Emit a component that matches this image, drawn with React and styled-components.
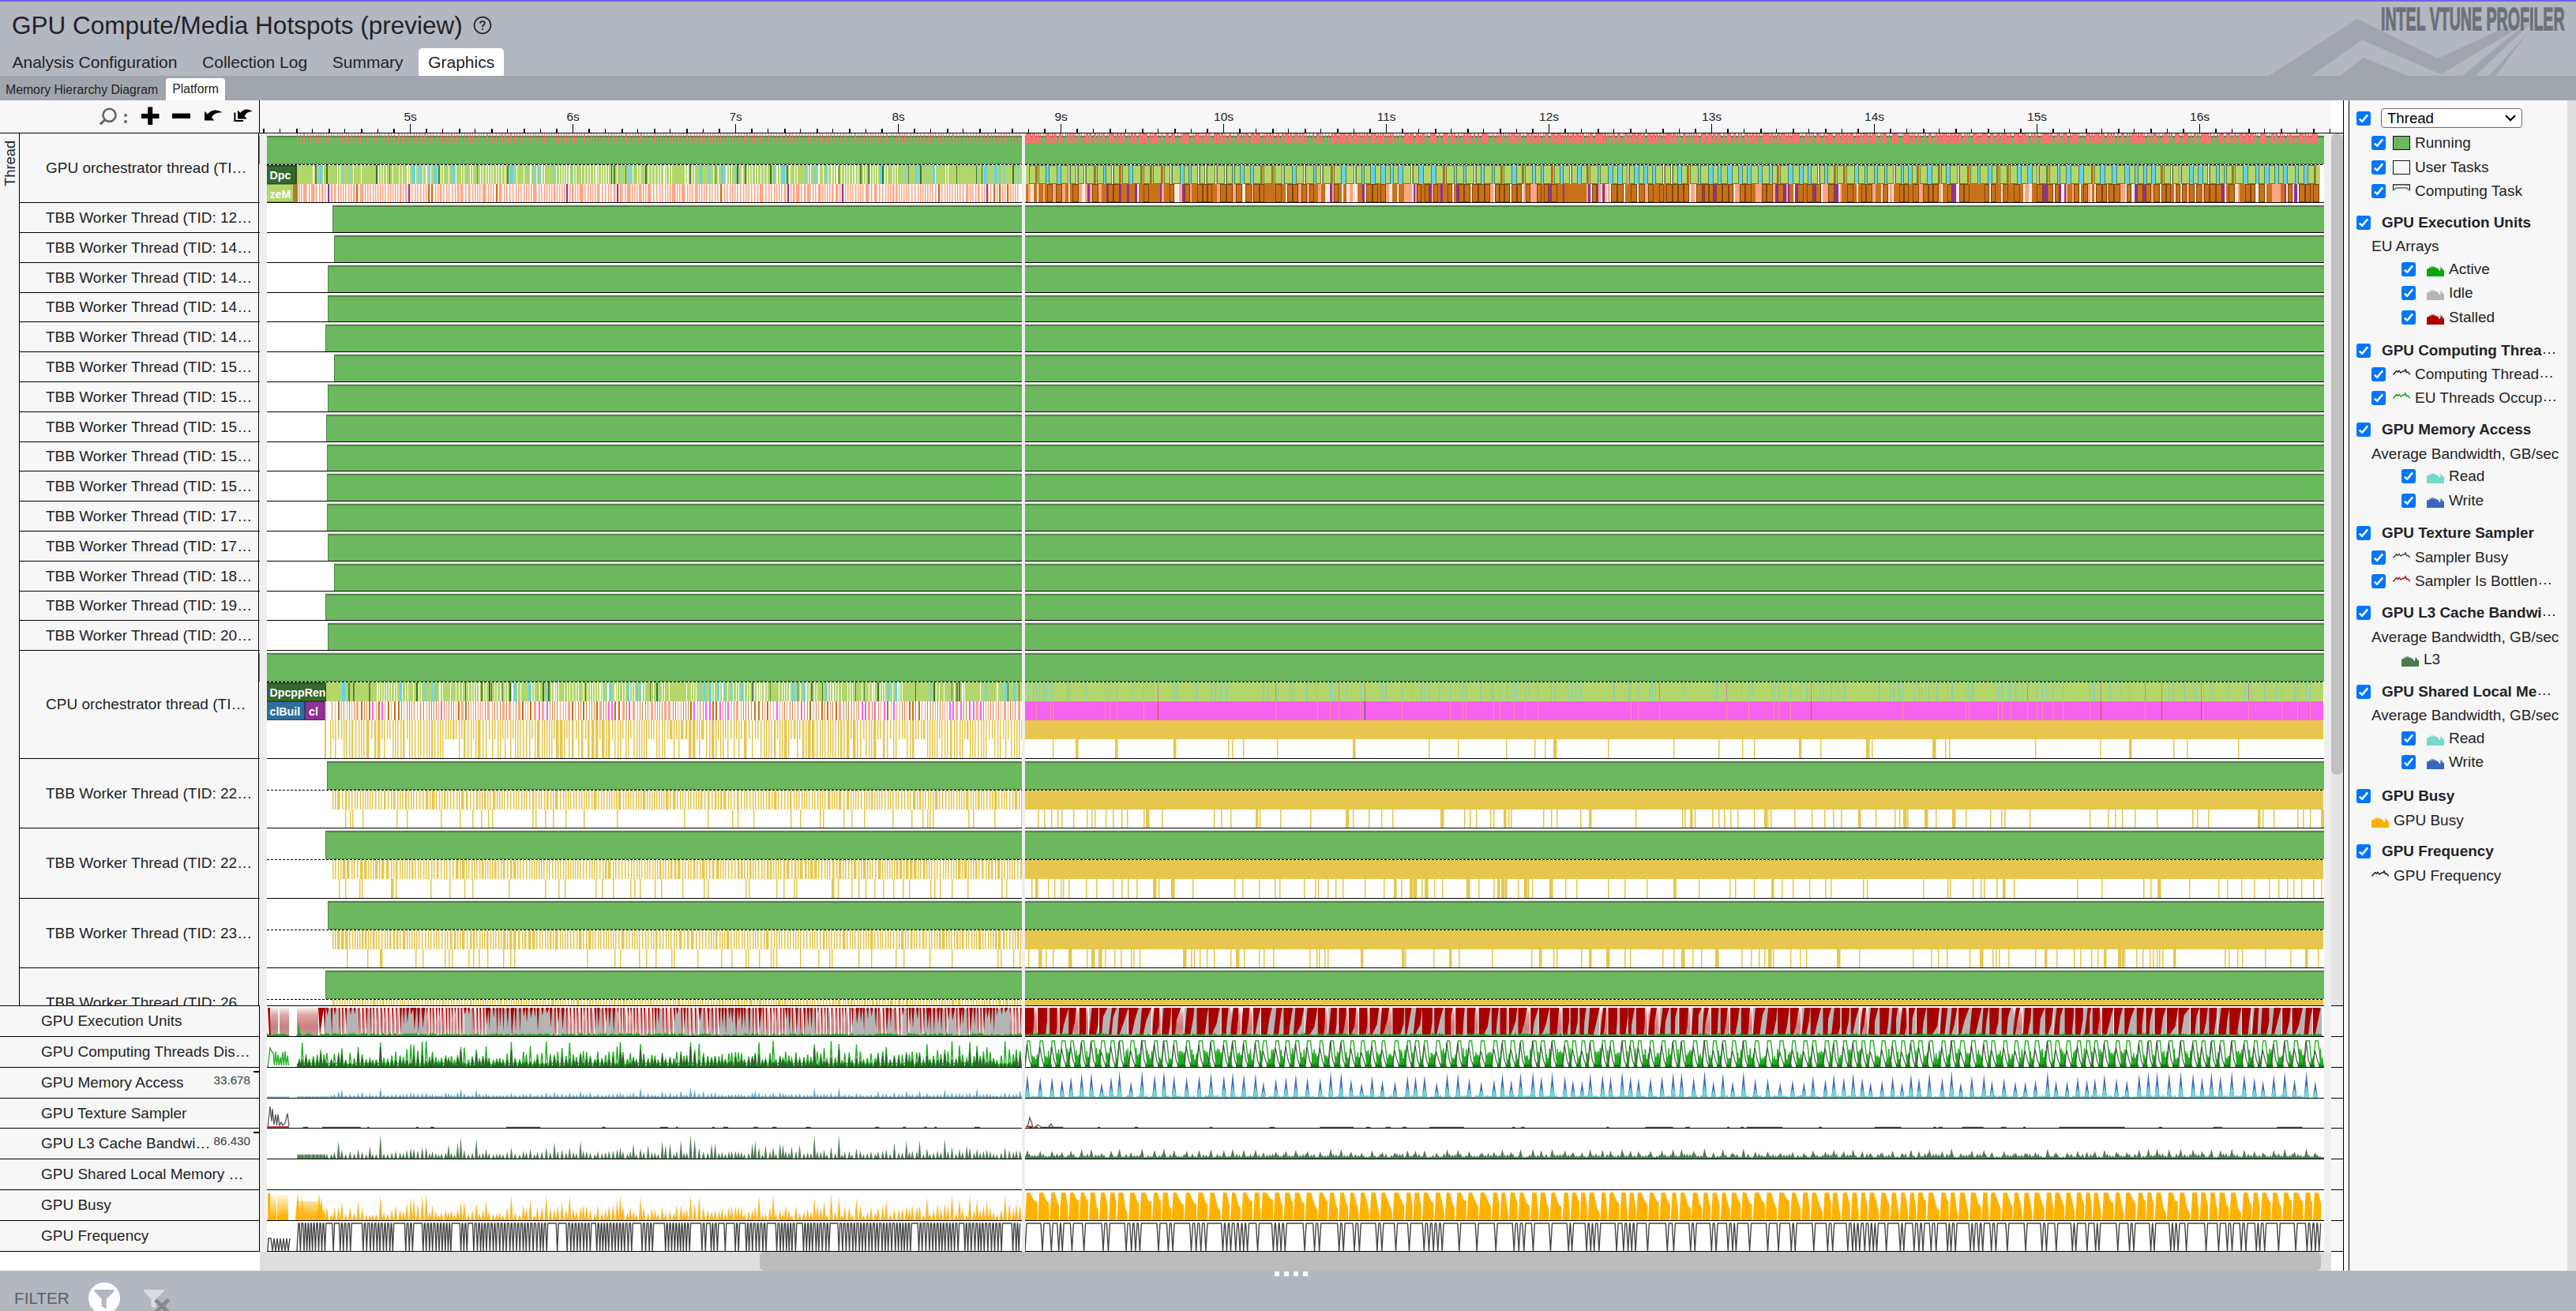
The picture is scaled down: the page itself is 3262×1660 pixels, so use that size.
import React from "react";
import styled, { createGlobalStyle } from "styled-components";

/* ---------- palette ---------- */
const C = {
  text: "#222326",
  bar: "#b3b7c0",
  sub: "#a1a5ac",
  panel: "#f7f7f7",
  green: "#6cb85e",
  greenEdge: "#55824b",
  lime: "#b3d66b",
  olive: "#5b8240",
  forest: "#35682b",
  cyan: "#62d3ee",
  salmon: "#ffa585",
  orange: "#c97119",
  orangeEdge: "#7d4509",
  purple: "#8f3296",
  magenta: "#f663ec",
  gold: "#e6c64d",
  goldSoft: "#f2e2a2",
  red: "#ff7272",
  gutter: "#efeff0",
};

const PLOT_W = 2605;
const SPLIT = 956;

/* ---------- deterministic sample data ---------- */
const rng = (seed) => () => {
  seed = (seed + 0x6d2b79f5) | 0;
  let t = Math.imul(seed ^ (seed >>> 15), 1 | seed);
  t = (t + Math.imul(t ^ (t >>> 7), 61 | t)) ^ t;
  return ((t ^ (t >>> 14)) >>> 0) / 4294967296;
};

const range = (n) => Array.from({ length: n }, (_, i) => i);

/* peaks of GPU activity in the dense right part of the timeline */
const PEAKS = (() => {
  const r = rng(91);
  const out = [];
  let x = SPLIT + 7;
  while (x < PLOT_W - 5) {
    out.push({ x, h: 0.55 + r() * 0.45, w: 0.4 + r() * 0.6 });
    x += 10 + r() * 6.4;
  }
  return out;
})();

/* kernel launches in the sparse left part */
const EVENTS = (() => {
  const r = rng(17);
  const out = [];
  let x = 41;
  while (x < SPLIT - 2) {
    const tall = r() < 0.2;
    out.push({ x, h: tall ? 0.55 + r() * 0.45 : 0.12 + r() * 0.42, m: r() });
    x += 3.4 + r() * 2.4;
  }
  return out;
})();

const f = (n) => Math.round(n * 10) / 10;

const box = (x, w, y, h) => `M${x} ${y}h${w}v${h}h${-w}z`;

/* items are [x, width, y, height, fill, layer] */
function Bars({ items }) {
  const groups = new Map();
  items.forEach(([x, w, y, h, fill, layer = 0]) => {
    const key = `${layer}|${fill}`;
    if (!groups.has(key)) groups.set(key, { layer, fill, d: "" });
    groups.get(key).d += box(x, w, y, h);
  });
  const sorted = [...groups.values()].sort((a, b) => a.layer - b.layer);
  return (
    <g shapeRendering="crispEdges">
      {sorted.map((g) => (
        <path key={g.layer + g.fill} d={g.d} fill={g.fill} />
      ))}
    </g>
  );
}

/* ---------- thread tracks ---------- */
const sparseGold = (seed, y, h, from, to, gap, wide) => {
  const r = rng(seed);
  const out = [];
  let x = from + r() * gap;
  while (x < to) {
    const big = r() < wide;
    const w = big ? 3 + Math.floor(r() * 2) : 1;
    out.push([Math.floor(x), w, y, h, C.gold]);
    out.push([Math.floor(x) + w, 1, y, h, C.goldSoft]);
    x += 3 + -Math.log(1 - r()) * gap;
  }
  return out;
};

const denseGold = (seed, y, h, from, to, keep = 1) => {
  const r = rng(seed);
  const out = [];
  for (let x = from; x < to; ) {
    const w = r() < 0.2 ? 2 + Math.floor(r() * 2) : 1;
    if (r() < keep) {
      out.push([x, w, y, h, C.gold]);
      out.push([x + w, 1, y, h, C.goldSoft]);
    }
    x += w + 2 + (r() < 0.35 ? 1 : 0);
  }
  return out;
};

const redMarks = () => {
  const r = rng(5);
  const out = [];
  for (let x = 38; x < SPLIT; ) {
    const w = r() < 0.09 ? 2 : 1;
    out.push([x, w, 0, 12, "rgba(255,112,112,.8)"]);
    x += w + 2 + Math.floor(r() * 2.2);
  }
  for (let x = SPLIT + 5; x < PLOT_W - 5; ) {
    const w = 1 + Math.floor(r() * r() * 10);
    out.push([x, w, 0, 12, C.red]);
    x += w + 1 + (r() < 0.3 ? 2 : 0);
  }
  return out;
};

const limeLeft = (seed, y, h, from, cyanRate) => {
  const r = rng(seed);
  const out = [[from, SPLIT - from, y, h, C.lime]];
  for (let x = from + 20; x < SPLIT - 2; x += 3 + Math.floor(r() * 1.5)) {
    const zone = Math.sin(x / 23) + Math.sin(x / 61 + seed);
    const p = r();
    const cyanHere = Math.sin(x / 19 + seed) > 0 ? cyanRate * 1.7 : cyanRate * 0.3;
    if (p < cyanHere) out.push([x, 1 + Math.floor(r() * 4), y, h, r() < 0.5 ? C.cyan : "#86d4c4", 1]);
    else if (p < cyanHere + 0.11) out.push([x, 1 + Math.floor(r() * 2), y, h, r() < 0.5 ? C.olive : "#3f7428", 2]);
    else if (zone > -1.2 && x < 830 ? p < 0.93 : p < 0.45) out.push([x, r() < 0.15 ? 2 : 1, y, h, "#f8fbf0", 1]);
  }
  return out;
};

const salmonLeft = (y, h) => {
  const r = rng(77);
  const out = [];
  for (let x = 40; x < SPLIT - 2; ) {
    const p = r();
    let w = 1;
    let fill = C.salmon;
    if (p < 0.045) {
      fill = C.orange;
      w = 2;
    } else if (p < 0.065) {
      fill = C.purple;
      w = 2;
    } else if (p < 0.25) w = 2 + Math.floor(r() * 3);
    out.push([x, w, y, h, fill]);
    out.push([x + w, 1, y, h, "#ffd0bf"]);
    x += w + 2 + Math.floor(r() * 1.5);
  }
  return out;
};

const gpuRight = () => {
  const r = rng(33);
  const out = [[SPLIT + 5, PLOT_W - SPLIT - 10, 40, 24, C.lime]];
  for (let x = SPLIT + 9; x < PLOT_W - 14; ) {
    const w = 7 + Math.floor(r() * 5);
    out.push([x, w, 40, 24, C.olive, 1], [x + 1, w - 2, 41, 22, C.lime, 2]);
    x += w;
    const p = r();
    if (p < 0.6) {
      const c = 2 + Math.floor(r() * 4);
      out.push([x, c, 40, 24, C.cyan, 1]);
      x += c;
    } else if (p < 0.78) {
      out.push([x, 2, 40, 24, C.orange, 1]);
      x += 3;
    } else {
      out.push([x, 1, 40, 24, "#fff", 1], [x + 1, 1, 40, 24, "#a8947a", 1]);
      x += 2;
    }
  }
  for (let x = SPLIT + 5; x < PLOT_W - 6; ) {
    const p = r();
    if (p < 0.32) {
      const w = 6 + Math.floor(r() * 3);
      out.push([x, w, 64, 23, C.orangeEdge, 1], [x + 1, w - 2, 65, 21, C.orange, 2]);
      x += w;
    } else if (p < 0.5) {
      const w = 3 + Math.floor(r() * 5);
      out.push([x, w, 64, 23, C.orange, 1]);
      x += w;
    } else if (p < 0.7) {
      const w = 2 + Math.floor(r() * 3);
      out.push([x, w, 64, 23, C.salmon, 1]);
      x += w;
    } else if (p < 0.8) {
      const w = 2 + Math.floor(r() * 2);
      out.push([x, w, 64, 23, C.purple, 1]);
      x += w;
    } else {
      out.push([x, 1, 64, 23, "#ffd9c8", 1]);
      x += 2;
    }
  }
  return out;
};

const cpuTracks = () => {
  const r = rng(208);
  const out = [];
  for (let x = 82; x < SPLIT; ) {
    const p = r();
    const zone = Math.sin(x / 17) > 0.2;
    let fill = p < 0.55 ? "#cf8a4c" : C.salmon;
    let w = 1;
    if (zone && p < 0.3) {
      fill = C.magenta;
      w = 2;
    } else if (p > 0.9) {
      fill = C.orange;
      w = 2;
    } else if (p > 0.8) w = 3;
    out.push([x, w, 64, 24, fill]);
    x += w + 2 + Math.floor(r() * 1.4);
  }
  const R = SPLIT + 4;
  out.push([R, PLOT_W - R - 1, 40, 24, C.lime]);
  out.push([R, PLOT_W - R - 1, 64, 24, C.magenta]);
  out.push([R, PLOT_W - R - 1, 88, 24, C.gold]);
  for (let x = R + 4; x < PLOT_W - 4; x += 3 + Math.floor(-Math.log(1 - r()) * 8)) {
    const p = r();
    out.push([x, p > 0.75 ? 2 : 1, 40, 24, p < 0.1 ? "#c583a8" : p < 0.65 ? "#7ecfc4" : "#8bd0b0", 1]);
    if (p < 0.36) out.push([x, 1, 64, 24, p < 0.03 ? "#5c5252" : p < 0.06 ? "#d3553f" : "#fb8fa0", 1]);
  }
  return out;
};

const TRACKS = {
  gpu: () => [...limeLeft(3, 40, 24, 38, 0.15), ...salmonLeft(64, 23), ...gpuRight()],
  cpu: () => [
    ...limeLeft(9, 40, 24, 75, 0.14),
    ...cpuTracks(),
    ...denseGold(41, 88, 24, 80, SPLIT),
    ...denseGold(41, 112, 24, 80, SPLIT, 0.68),
    ...sparseGold(43, 112, 24, SPLIT + 6, PLOT_W, 34, 0.25),
  ],
};

const workerTracks = (seed, cut) => {
  const R = SPLIT + 4;
  const items = [
    ...denseGold(seed, 40, Math.min(24, cut - 41), 83, SPLIT),
    [R, PLOT_W - R - 1, 40, Math.min(24, cut - 41), C.gold],
  ];
  if (cut > 64) {
    items.push(
      ...sparseGold(seed + 1, 64, cut - 65, 86, SPLIT, 16, 0.04),
      ...sparseGold(seed + 2, 64, cut - 65, R + 4, PLOT_W, 13, 0.22)
    );
  }
  return items;
};

function ThreadPlot({ row }) {
  const { h, start, kind } = row;
  const tall = kind !== "plain";
  const bottom = tall ? 39 : h - 1;
  return (
    <PlotSvg width={PLOT_W} height={h} viewBox={`0 0 ${PLOT_W} ${h}`}>
      <g shapeRendering="crispEdges">
        <rect x={start} y="2" width={PLOT_W - start} height="1" fill="#d9e0d7" />
        <rect x={start} y="3" width={PLOT_W - start} height={bottom - 3} fill={C.greenEdge} />
        <rect
          x={start ? start + 1 : 0}
          y="5"
          width={PLOT_W - start}
          height={bottom - 5 - (tall ? 1 : 0)}
          fill={C.green}
        />
        {tall && (
          <>
            <rect x="0" y="39" width={PLOT_W} height="1" fill="#fff" />
            <path d={`M0 39.5H${PLOT_W}`} stroke="#000" strokeDasharray="3 2" />
          </>
        )}
      </g>
      {kind === "gpu" && (
        <>
          <Bars items={redMarks()} />
          <Bars items={TRACKS.gpu()} />
          <rect x="0" y="40" width="38" height="24" fill="#28501f" />
          <rect x="0" y="42" width="36" height="21" fill={C.forest} />
          <TaskText x="3.5" y="58">Dpc</TaskText>
          <rect x="0" y="64" width="35" height="23" fill="#75944a" />
          <rect x="0" y="65" width="33" height="21" fill={C.lime} />
          <rect x="35" y="64" width="4" height="23" fill={C.orange} />
          <TaskText x="3.5" y="82">zeM</TaskText>
        </>
      )}
      {kind === "cpu" && (
        <>
          <Bars items={TRACKS.cpu()} />
          <rect x="0" y="40" width="75" height="24" fill="#28501f" />
          <rect x="0" y="42" width="74" height="21" fill={C.forest} />
          <TaskText x="3.5" y="58">DpcppRen</TaskText>
          <rect x="0" y="64" width="49" height="24" fill="#1d4566" />
          <rect x="0" y="65" width="47" height="22" fill="#2f6d9c" />
          <TaskText x="3.5" y="82">clBuil</TaskText>
          <rect x="49" y="64" width="24" height="24" fill="#5d1f63" />
          <rect x="49" y="65" width="23" height="22" fill={C.purple} />
          <TaskText x="53" y="82">cl</TaskText>
          <rect x="73" y="64" width="2" height="24" fill={C.magenta} />
          <rect x="73" y="88" width="2" height="48" fill={C.gold} />
        </>
      )}
      {kind === "worker" && <Bars items={workerTracks(row.seed, h)} />}
      <rect x="0" y={h - 1} width={PLOT_W} height="1" fill="#000" />
      <rect x={SPLIT} y="0" width="4" height={h} fill={C.gutter} />
    </PlotSvg>
  );
}

/* ---------- metric charts ---------- */
const spikes = (list, base, height, half) =>
  list.map(({ x, h }) => `M${f(x - half)} ${base}L${f(x)} ${f(base - h * height)}L${f(x + half)} ${base}z`).join("");

function EuChart({ b }) {
  const r = rng(64);
  let grey = "";
  let red = `M1 2H4L5 ${b}H3z`;
  let fade = box(5, 9, 2, b - 2) + box(16, 12, 2, b - 2) + box(38, 27, 2, b - 2);
  red += `M65 2H72L69 24L67 ${b}z`;
  EVENTS.forEach(({ x, h, m }, i) => {
    if (x < 70) return;
    const next = EVENTS[i + 1] ? EVENTS[i + 1].x : SPLIT;
    const span = next - x;
    const calm = Math.sin(x / 41) + Math.sin(x / 13) > -0.5;
    if (calm && m < 0.75) {
      grey += box(f(x), f(span), 3, b - 3);
      red += `M${f(x - 0.8)} 2h${f(2 + h * 2.6)}L${f(x + 0.7)} ${f(8 + m * 40)}z`;
    } else {
      fade += box(f(x), f(span * 0.72), 2, b - 2);
      red += `M${f(x)} 2h1.9L${f(x + 1)} ${f(10 + m * 26)}z`;
    }
  });
  PEAKS.forEach(({ x: px, h, w }, i) => {
    const x = px - 3;
    const next = (PEAKS[i + 1] ? PEAKS[i + 1].x : PLOT_W) - 3;
    const span = next - x;
    if (w > 0.55) grey += box(f(x), f(span - (h > 0.85 ? 1 : 0)), 2, b - 2);
    else fade += box(f(x), f(span - 1), 2, b - 2);
    const top = span * (0.5 + w * 0.5);
    const low = span * (0.2 + r() * 0.5);
    const lean = r() < 0.35 ? 2 + r() * 2 : 0;
    const mid = Math.min(top, Math.max(low, (top + low) / 2 + (r() - 0.5) * 4));
    red += `M${f(x + lean)} 2H${f(x + top)}L${f(x + mid)} ${f(b * (0.3 + r() * 0.4))}L${f(x + low)} ${b - 2}H${f(x)}z`;
  });
  const jag = range(Math.floor(PLOT_W / 3)).map((i) => ({ x: i * 3, h: i > 9 && i < 13 ? 0 : 0.3 + r() * 0.7 }));
  return (
    <>
      <path d={grey} fill="#b4b4b4" />
      <path d={fade} fill="url(#euFade)" />
      <path d={red} fill="#a80000" />
      <path d={spikes(jag, b, 5, 2.4)} fill="#10a510" />
      <path d={`M39 ${b}L40 20L42 ${b}z`} fill="#10a510" />
    </>
  );
}

function ThreadsChart({ b }) {
  const r = rng(12);
  const green = [`M1 ${b}L4 14L6 18`];
  for (let x = 8; x < 28; x += 3) green.push(`L${x} ${f(18 + r() * 8)}L${x + 1.4} ${b - 2}`);
  green.push(`M38 ${b}`);
  const dark = [`M38 ${b - 4}`];
  const small = [];
  EVENTS.forEach(({ x, h, m }) => {
    green.push(`L${f(x - 1.4)} ${f(b - 2 - m * 3)}L${f(x)} ${f(b - 4 - h * 30)}L${f(x + 1.4)} ${f(b - 4)}`);
    dark.push(`L${f(x - 1.2)} ${b - 1}L${f(x)} ${f(b - 3 - m * h * 26)}L${f(x + 1.2)} ${b - 2}`);
    small.push({ x, h: 0.4 + m * 0.6 });
  });
  green.push(`M${SPLIT + 4} ${b}`);
  dark.push(`M${SPLIT + 4} ${b}`);
  PEAKS.forEach(({ x, h, w }, i) => {
    const next = PEAKS[i + 1] ? PEAKS[i + 1].x : PLOT_W;
    green.push(
      `L${f(x - 2.5)} ${b - 3}L${f(x)} 5L${f(x + 2 + w * 2)} 5L${f(x + 4 + w * 2)} ${f(12 + h * 14)}L${f(x + 6.5)} ${b - 3}`
    );
    for (let k = x + 6.5; k < next - 2.4; k += 2) {
      green.push(`L${f(k)} ${f(14 + r() * 15)}L${f(k + 1)} ${b - 3}`);
      small.push({ x: k, h: 0.5 + r() * 0.5 });
    }
    dark.push(
      `L${f(x - 3.5)} ${b - 2}L${f(x - 0.5)} ${f(b - h * 34)}L${f(x + 2.5)} ${f(b - 9)}L${f(x + 5)} ${b - 2}`
    );
  });
  return (
    <>
      <path d={spikes(small, b, 14, 2.6)} fill="#169016" />
      <path d={green.join("")} fill="none" stroke="#1fae1f" strokeWidth="1.35" />
      <path d={dark.join("")} fill="none" stroke="#3c443c" strokeWidth="1.25" strokeOpacity=".85" />
    </>
  );
}

function MemoryChart({ b }) {
  const left = EVENTS.map(({ x, h, m }) => ({ x, h: x < 80 ? 0.06 : m > 0.8 ? h * 0.35 + 0.1 : 0.08 + h * 0.13 }));
  const r = rng(8);
  const foot = range(540).map((i) => ({ x: SPLIT + 5 + i * 3, h: 0.3 + r() * 0.7 }));
  return (
    <>
      <rect x="0" y={b - 1.5} width="28" height="1.5" fill="#6fbfd8" />
      <rect x="38" y={b - 1.6} width={SPLIT - 38} height="1.6" fill="#79cfd6" />
      <path d={spikes(left, b, 34, 1.9)} fill="#62a8cf" />
      <path d={spikes(PEAKS.map((p) => ({ ...p, h: p.h * 1.02 })), b, 34, 3.1)} fill="#3b68c4" />
      <path d={spikes(PEAKS, b, 17, 3.6)} fill="#72d9cd" />
      <path d={spikes(foot, b, 4, 2.4)} fill="#62bfcf" />
    </>
  );
}

function SamplerChart({ b }) {
  const r = rng(61);
  const flat = range(70).map(() => ({ x: 38 + r() * (PLOT_W - 90), w: r() < 0.22 ? 20 + r() * 30 : 2 + r() * 5 }));
  return (
    <>
      <path
        d={`M1 ${b}L4 10L6 ${b - 8}L7 13L9 ${b - 4}L11 20L12.5 ${b - 3}L14 20L16 ${b - 3}L18 30L20 ${b - 3}L23 ${b - 6}L26 19L28 ${b - 2}`}
        fill="none"
        stroke="#555"
        strokeWidth="1.3"
      />
      <path d={`M1 ${b - 1}H28`} stroke="#b31313" strokeWidth="1.6" />
      <path d={flat.map(({ x, w }) => box(f(x), f(w), b - 1.3, 1.3)).join("")} fill="#555" />
      <path
        d={`M963 ${b - 1}L966 ${b - 13}L970 ${b - 1}M973 ${b - 1}L976 ${b - 4}L980 ${b - 1}M990 ${b - 1}L993 ${b - 5}L995 ${b - 1}`}
        fill="none"
        stroke="#555"
        strokeWidth="1.3"
      />
      <path d={`M961 ${b - 1.5}H969`} stroke="#b31313" strokeWidth="1.6" />
    </>
  );
}

function CacheChart({ b }) {
  const r = rng(82);
  const left = EVENTS.map(({ x, h, m }) => ({ x, h: x < 76 ? 0.2 : m > 0.86 ? 0.4 + h * 0.6 : 0.12 + h * 0.34 }));
  const foot = range(470).map((i) => ({ x: SPLIT + 6 + i * 3.5, h: 0.3 + r() * 0.7 }));
  return (
    <>
      <rect x="38" y={b - 5} width="36" height="5" fill="#81a284" />
      <path d={spikes(left, b, 33, 2)} fill="#4f7a52" />
      <path d={spikes(PEAKS, b, 13, 3)} fill="#4f7a52" />
      <path d={spikes(foot, b, 7, 2.8)} fill="#4f7a52" />
    </>
  );
}

function BusyChart({ b }) {
  const r = rng(29);
  let d = box(1, 3, 4, b - 4);
  const soft = box(4, 8, 6, b - 6) + box(13, 14, 6, b - 6) + box(38, 26, 14, b - 14);
  d += spikes([{ x: 39, h: 0.97 }, { x: 66, h: 0.95 }, { x: 69, h: 0.8 }], b, 36, 3);
  const left = EVENTS.map((e) => ({ x: e.x, h: e.h * 0.9 + 0.08 }));
  PEAKS.forEach(({ x, h, w }, i) => {
    const next = PEAKS[i + 1] ? PEAKS[i + 1].x : PLOT_W;
    const e = next - 3.4 - r();
    const tail = 12 + r() * 20;
    d += `M${f(x - 3)} ${b}L${f(x - 1)} 3H${f(x + 2 + w * 2.8)}L${f((x + e) / 2 + 2.4)} ${f(6 + h * tail * 0.6)}L${f(e)} ${f(tail)}V${b}z`;
  });
  return (
    <>
      <path d={soft} fill="url(#busyFade)" />
      <path d={spikes(left, b, 35, 2.3)} fill="#fdb62a" />
      <path d={d} fill="#ffb300" />
    </>
  );
}

function FrequencyChart({ b }) {
  const r = rng(73);
  let p = `M1 ${b}L2 22H5`;
  for (let x = 7; x < 28; x += 4) p += `L${x} ${b}L${x + 2} 22`;
  p += `M38 ${b}L40 3`;
  for (let x = 41; x < SPLIT - 5; ) {
    p += `L${f(x)} 3L${f(x + 1.4)} ${b}L${f(x + 2.9)} 3`;
    x += r() < 0.12 ? 7 + r() * 10 : 3.4 + r() * 1.3;
  }
  p += `M${SPLIT + 4} ${b}L${SPLIT + 6} 3`;
  for (let x = SPLIT + 24; x < PLOT_W - 5; ) {
    p += `L${f(x)} 3L${f(x + 2)} ${b}L${f(x + 4)} 3`;
    x += r() < 0.45 ? 4.2 + r() * 2.4 : 8 + r() * 17;
  }
  return <path d={p} fill="none" stroke="#454545" strokeWidth="1.4" />;
}

const CHARTS = {
  eu: EuChart,
  threads: ThreadsChart,
  memory: MemoryChart,
  sampler: SamplerChart,
  cache: CacheChart,
  busy: BusyChart,
  freq: FrequencyChart,
};

function MetricPlot({ kind, h }) {
  const Chart = CHARTS[kind];
  return (
    <PlotSvg width={PLOT_W} height={h} viewBox={`0 0 ${PLOT_W} ${h}`}>
      <defs>
        <linearGradient id="euFade" gradientUnits="userSpaceOnUse" x1="0" y1="0" x2="0" y2="38">
          <stop offset="0" stopColor="#fff" />
          <stop offset=".3" stopColor="#e0a3a3" />
          <stop offset=".7" stopColor="#c98080" />
          <stop offset="1" stopColor="#c0a0a0" />
        </linearGradient>
        <linearGradient id="busyFade" gradientUnits="userSpaceOnUse" x1="0" y1="0" x2="0" y2="38">
          <stop offset=".2" stopColor="#fff3d6" />
          <stop offset=".9" stopColor="#ffb300" />
        </linearGradient>
      </defs>
      {Chart && <Chart b={h - 1} />}
      <rect x="0" y={h - 1} width={PLOT_W} height="1" fill="#000" />
      <rect x={SPLIT} y="0" width="4" height={h} fill={C.gutter} />
    </PlotSvg>
  );
}

/* ---------- rows ---------- */
const LINES = [256, 294, 332, 370, 407, 445, 483, 521, 559, 596, 634, 672, 710, 748, 785, 823];
const WORKERS = [
  ["12", 83], ["14", 85], ["14", 77], ["14", 77], ["14", 74], ["15", 85], ["15", 77], ["15", 75],
  ["15", 76], ["15", 76], ["17", 76], ["17", 77], ["18", 85], ["19", 74], ["20", 77],
];
const THREADS = [
  { name: "GPU orchestrator thread (TI…", h: 88, start: 0, kind: "gpu" },
  ...WORKERS.map(([id, start], i) => ({
    name: `TBB Worker Thread (TID: ${id}…`,
    h: LINES[i + 1] - LINES[i],
    start,
    kind: "plain",
  })),
  { name: "CPU orchestrator thread (TI…", h: 137, start: 0, kind: "cpu" },
  { name: "TBB Worker Thread (TID: 22…", h: 88, start: 76, kind: "worker", seed: 301 },
  { name: "TBB Worker Thread (TID: 22…", h: 89, start: 74, kind: "worker", seed: 402 },
  { name: "TBB Worker Thread (TID: 23…", h: 88, start: 77, kind: "worker", seed: 503 },
  { name: "TBB Worker Thread (TID: 26", h: 48, start: 74, kind: "worker", seed: 604, full: 88 },
];

const METRICS = [
  { name: "GPU Execution Units", h: 39, kind: "eu" },
  { name: "GPU Computing Threads Dis…", h: 39, kind: "threads" },
  { name: "GPU Memory Access", h: 39, kind: "memory", max: "33.678" },
  { name: "GPU Texture Sampler", h: 38, kind: "sampler" },
  { name: "GPU L3 Cache Bandwi…", h: 39, kind: "cache", max: "86.430" },
  { name: "GPU Shared Local Memory …", h: 39, kind: "none" },
  { name: "GPU Busy", h: 39, kind: "busy" },
  { name: "GPU Frequency", h: 39, kind: "freq" },
];

/* h is the distance to the following entry's baseline */
const LEGEND = [
  { t: "select", h: 31 },
  { t: "item", label: "Running", icon: "fill", h: 31 },
  { t: "item", label: "User Tasks", icon: "outline", h: 30 },
  { t: "item", label: "Computing Task", icon: "cap", h: 40 },
  { t: "group", label: "GPU Execution Units", h: 30 },
  { t: "note", label: "EU Arrays", h: 29 },
  { t: "deep", label: "Active", icon: "area", color: "#0aa80a", h: 30 },
  { t: "deep", label: "Idle", icon: "area", color: "#b5b5b5", h: 31 },
  { t: "deep", label: "Stalled", icon: "area", color: "#ab0000", h: 41.5 },
  { t: "group", label: "GPU Computing Threa", more: true, h: 30.5 },
  { t: "item", label: "Computing Thread", more: true, icon: "line", color: "#2a2a2a", h: 30 },
  { t: "item", label: "EU Threads Occup", more: true, icon: "line", color: "#1ba31b", h: 40 },
  { t: "group", label: "GPU Memory Access", h: 31 },
  { t: "note", label: "Average Bandwidth, GB/sec", h: 28 },
  { t: "deep", label: "Read", icon: "area", color: "#74dac9", h: 30.5 },
  { t: "deep", label: "Write", icon: "area", color: "#3a66bf", h: 41 },
  { t: "group", label: "GPU Texture Sampler", h: 31 },
  { t: "item", label: "Sampler Busy", icon: "line", color: "#4a4a4a", h: 30 },
  { t: "item", label: "Sampler Is Bottlen", more: true, icon: "line", color: "#a81414", h: 40 },
  { t: "group", label: "GPU L3 Cache Bandwi", more: true, h: 31 },
  { t: "note", label: "Average Bandwidth, GB/sec", h: 28 },
  { t: "deepBare", label: "L3", icon: "area", color: "#4a7a4d", h: 41.5 },
  { t: "group", label: "GPU Shared Local Me", more: true, h: 30 },
  { t: "note", label: "Average Bandwidth, GB/sec", h: 29 },
  { t: "deep", label: "Read", icon: "area", color: "#74dac9", h: 30 },
  { t: "deep", label: "Write", icon: "area", color: "#3a66bf", h: 42.5 },
  { t: "group", label: "GPU Busy", h: 31 },
  { t: "bare", label: "GPU Busy", icon: "area", color: "#fbb100", h: 39.5 },
  { t: "group", label: "GPU Frequency", h: 31 },
  { t: "bare", label: "GPU Frequency", icon: "line", color: "#222", h: 30 },
];

/* ---------- styled parts ---------- */
const GlobalStyle = createGlobalStyle`
  *, *::before, *::after { box-sizing: border-box; }
  body { margin: 0; background: #fff; color: ${C.text}; font-family: "Liberation Sans", Arial, sans-serif; }
`;

const Page = styled.div`
  display: flex;
  flex-direction: column;
  width: 3262px;
  height: 1660px;
  overflow: hidden;
  font-size: 19px;
  white-space: nowrap;
`;
const TopBar = styled.header`
  display: flex;
  justify-content: space-between;
  height: 96px;
  border-top: 2px solid #7160e2;
  background: ${C.bar};
`;
const TopLeft = styled.div`
  display: flex;
  flex-direction: column;
  justify-content: space-between;
`;
const Title = styled.h1`
  display: flex;
  align-items: center;
  gap: 13px;
  margin: 0;
  padding: 11px 0 0 15px;
  font-size: 31.5px;
  font-weight: 400;
  line-height: 38px;
`;
const Tabs = styled.nav`
  display: flex;
  gap: 7.6px;
  padding-left: 3.5px;
`;
const Tab = styled.div`
  height: 35px;
  padding: 0 12px;
  border-radius: 5px 5px 0 0;
  background: ${(p) => (p.$active ? "#fff" : "transparent")};
  font-size: 21px;
  line-height: 35px;
`;
const SubTabs = styled.nav`
  display: flex;
  align-items: flex-end;
  height: 31px;
  padding-left: 7px;
  gap: 10px;
  background: ${C.sub};
  font-size: 15.8px;
`;
const SubTab = styled.div`
  height: 28px;
  padding: ${(p) => (p.$active ? "0 8px" : "1px 0 0")};
  border-radius: 4px 4px 0 0;
  background: ${(p) => (p.$active ? "#fff" : "transparent")};
  line-height: 28px;
`;
const Main = styled.main`
  display: flex;
  height: 1482px;
  background: #fff;
`;
const Timeline = styled.section`
  display: flex;
  flex-direction: column;
  width: 2968px;
  border-right: 1px solid #000;
`;
const RulerRow = styled.div`
  display: flex;
  height: 42px;
  border-bottom: 1px solid #000;
`;
const Toolbar = styled.div`
  width: 329px;
  border-right: 1px solid #000;
  background: ${C.panel};
`;
const Ruler = styled.svg`
  display: block;
  width: 2623px;
  height: 41px;
  background: ${C.panel};
  font-size: 15.5px;
`;
const ThreadArea = styled.div`
  display: flex;
  height: 1105px;
`;
const Rail = styled.div`
  display: flex;
  justify-content: center;
  width: 25px;
  padding: 8px 0 0 2px;
  border-right: 1px solid #000;
  border-bottom: 1px solid #000;
  background: #f5f5f5;
`;
const RailText = styled.span`
  writing-mode: vertical-rl;
  transform: rotate(180deg);
  height: 59px;
  font-size: 18.4px;
  line-height: 22px;
`;
const Rows = styled.div`
  display: flex;
  flex-direction: column;
`;
const Row = styled.div`
  display: flex;
  height: ${(p) => p.$h}px;
`;
const ThreadLabel = styled.div`
  width: 303px;
  overflow: hidden;
  padding-left: 33px;
  border-right: 1px solid #000;
  border-bottom: 1px solid #000;
  background: ${C.panel};
  line-height: ${(p) => p.$line}px;
`;
const Sliver = styled.div`
  width: 1px;
  border-bottom: 1px solid #000;
  background: ${(p) => (p.$green ? `linear-gradient(#fff 3px, ${C.greenEdge} 3px 39px, #fff 39px)` : "#fff")};
`;
const Gutter = styled.div`
  width: 9px;
  background: ${C.gutter};
`;
const PlotSvg = styled.svg`
  display: block;
  flex: none;
  background: #fff;
`;
const TaskText = styled.text`
  fill: #fff;
  font-size: 14.2px;
  font-weight: 700;
`;
const VScroll = styled.div`
  width: 15px;
  border-bottom: 1px solid #000;
  background: #e4e4e4;
`;
const VThumb = styled.div`
  height: 812px;
  border-radius: 7px;
  background: #c1c1c1;
`;
const MetricLabel = styled.div`
  display: flex;
  justify-content: space-between;
  width: 329px;
  border-right: 1px solid #000;
  border-bottom: 1px solid #000;
  padding-left: 52px;
  background: ${C.panel};
  line-height: ${(p) => p.$h - 1}px;
`;
const MaxValue = styled.div`
  display: flex;
  align-items: flex-start;
  gap: 4px;
  color: #3a3c3f;
  font-size: 15.2px;
  line-height: 31px;
`;
const MaxTick = styled.i`
  width: 7px;
  height: 2px;
  margin-top: 4px;
  background: #000;
`;
const MetricEnd = styled.div`
  width: 15px;
  border-bottom: 1px solid #000;
  background: ${C.panel};
`;
const HScrollRow = styled.div`
  display: flex;
  height: 24px;
  padding-left: 329px;
`;
const HTrack = styled.div`
  display: flex;
  justify-content: flex-end;
  width: 2623px;
  padding-right: 13px;
  background: #dedede;
`;
const HThumb = styled.div`
  width: 1977px;
  border-radius: 6px;
  background: #bcbcbc;
`;
const Legend = styled.aside`
  width: 277px;
  margin-left: 6px;
  padding: 11px 0 0 9px;
  border-left: 1px solid #000;
  background: ${C.panel};
`;
const LegendScroll = styled.div`
  width: 11px;
  background: #dedede;
`;
const INDENT = { select: 0, group: 0, item: 19, note: 19, bare: 19, deep: 57, deepBare: 57 };
const ICON_GAP = { item: 9, deep: 14 };
const LegendRow = styled.div`
  display: flex;
  height: ${(p) => p.$h}px;
  padding-left: ${(p) => INDENT[p.$t]}px;
  font-size: ${(p) => (p.$t === "group" ? 18.9 : 19)}px;
  font-weight: ${(p) => (p.$t === "group" ? 700 : 400)};
  line-height: 24px;
`;
const CheckBox = styled.span`
  display: flex;
  flex: none;
  width: 18px;
  height: 18px;
  margin: 3px ${(p) => p.$gap}px 0 0;
  border-radius: 3px;
  background: #0075ff;
`;
const IconSlot = styled.span`
  display: flex;
  margin: 3px 6px 0 0;
`;
const More = styled.span`
  position: relative;
  top: -2px;
  font-weight: 400;
`;
const Select = styled.div`
  display: flex;
  justify-content: space-between;
  align-items: center;
  width: 179px;
  height: 25px;
  margin-top: -1px;
  padding: 0 7px;
  border: 1px solid #6b6b6b;
  border-radius: 4px;
  background: #fff;
  color: #000;
  font-size: 18.6px;
`;
const Footer = styled.footer`
  position: relative;
  display: flex;
  align-items: flex-start;
  height: 51px;
  padding: 14px 0 0 18px;
  background: ${C.bar};
`;
const FilterLabel = styled.span`
  width: 93px;
  color: #5a5f66;
  font-size: 20.7px;
  line-height: 42px;
`;
const Grip = styled.div`
  position: absolute;
  top: 1px;
  left: 1614px;
  display: flex;
  gap: 6px;
`;
const GripDot = styled.i`
  width: 6px;
  height: 6px;
  background: #fff;
`;

/* ---------- small drawings ---------- */
const HelpIcon = () => (
  <svg width="24" height="24" viewBox="0 0 24 24">
    <circle cx="12" cy="12" r="10.4" fill="none" stroke="#26282b" strokeWidth="1.8" />
    <path d="M9.1 9.8C9.1 6 14.9 6 14.9 9.3C14.9 11.6 12 11.4 12 14M12 15.8v2" fill="none" stroke="#26282b" strokeWidth="1.9" />
  </svg>
);

const Logo = () => (
  <svg width="400" height="94" viewBox="2862 2 400 94">
    <g fill="#a1a5ad">
      <path d="M2873 96L2985 24L3087 74L3178 32L3198 30L3091 94L2991 50.7L2926 96z" />
      <path d="M2963.4 96L2993 73L3049.5 96z" />
      <path d="M3117.6 96L3196 32L3206 28L3134.4 96z" />
      <path d="M3152 96L3200 42L3206 34L3160.6 96z" />
    </g>
    <g transform="translate(3015 38) scale(.478 1)">
      <text fontSize="41" fontWeight="700" fill="#6b7078" stroke="#6b7078" strokeWidth="1" vectorEffect="non-scaling-stroke">
        INTEL VTUNE PROFILER
      </text>
    </g>
  </svg>
);

const ToolbarIcons = () => (
  <svg width="328" height="41" viewBox="0 127 328 41">
    <circle cx="138.5" cy="145.8" r="8" fill="none" stroke="#666" strokeWidth="2.6" />
    <path d="M132.8 151.8L126.8 157.4" stroke="#666" strokeWidth="3.2" />
    <circle cx="159" cy="146" r="2" fill="#666" />
    <circle cx="159" cy="154" r="2" fill="#666" />
    <path d="M179 147H201.5M190.2 135.6V158" stroke="#000" strokeWidth="6" />
    <path d="M218 146.8H241" stroke="#000" strokeWidth="6.4" />
    <path d="M259 141V152.5H271.5L268 149C270 144.5 274 142.5 281.5 142.3C274 137.8 267.5 139 262.8 144.6z" />
    <path d="M301 139.6V150.5H313L309.6 147.2C311.4 143.2 314 141 320 141.2C313.5 136.8 308 138 304.4 143z" />
    <path d="M297.4 142.5V153H308" fill="none" stroke="#000" strokeWidth="2" />
  </svg>
);

const AreaIcon = ({ color }) => (
  <svg width="22" height="18" viewBox="0 0 22 18">
    <path
      fill={color}
      d="M0 18V9L2.4 7.6L3 8.6L3.6 5.6L4.4 8L5.2 4.6L6 7.4L7 4L7.8 6.8L8.6 4.6L9.4 7.4L10.2 5L11 7.6L12 6L13 8.4L14.4 7.4L15.4 10.6L17 11L17.8 5L18.6 8L19.4 6.4L20.2 10L22 9.6V18z"
    />
  </svg>
);
const LineIcon = ({ color }) => (
  <svg width="22" height="18" viewBox="0 0 22 18">
    <path d="M.5 9.4L4.6 4.8L6.4 6.2L8 4.4L10 7L12.4 5.4L15 4.8L16 3L17.4 6.4L19.4 6.2L21.8 9.2" fill="none" stroke={color} strokeWidth="1.5" />
  </svg>
);
const BoxIcon = ({ fill }) => (
  <svg width="22" height="18" viewBox="0 0 22 18">
    <rect x=".5" y=".5" width="21" height="17" fill={fill} stroke="#111" />
  </svg>
);
const CapIcon = () => (
  <svg width="22" height="18" viewBox="0 0 22 18">
    <path d="M.5 8.5V.8H21.5V8.5" fill="none" stroke="#111" strokeWidth="1.2" />
    <path d="M1.5 7.5Q3.5 4.8 6 4.8H16Q18.5 4.8 20.5 7.5" fill="none" stroke="#777" strokeWidth="1.8" />
  </svg>
);
const ICONS = {
  fill: () => <BoxIcon fill={C.green} />,
  outline: () => <BoxIcon fill="#f7f7f7" />,
  cap: CapIcon,
  area: AreaIcon,
  line: LineIcon,
};

const Check = ({ gap }) => (
  <CheckBox $gap={gap}>
    <svg width="18" height="18" viewBox="0 0 18 18">
      <path d="M3.8 9.6L7.2 12.8L14.2 4.4" fill="none" stroke="#fff" strokeWidth="2.5" />
    </svg>
  </CheckBox>
);

const FilterIcons = () => (
  <svg width="110" height="37" viewBox="110 1623 110 37">
    <circle cx="131" cy="1643.8" r="20" fill="#fff" />
    <path d="M118.3 1633H143.7V1635L133.7 1645V1657.5L127.7 1654V1645L118.3 1635z" fill={C.bar} />
    <path d="M181 1633H207V1635L196.5 1645V1657L190.5 1654V1645L181 1635z" fill="#d8dce0" />
    <path d="M196 1646L212.5 1662M212.5 1645.5L196 1662" stroke="#85898e" strokeWidth="5" />
  </svg>
);

const TimeRuler = () => (
  <Ruler viewBox="329 127 2623 41">
    <g shapeRendering="crispEdges">
      {range(128).map((i) => {
        const n = i - 9;
        const major = n % 10 === 0;
        const x = Math.floor(519.3 + n * 20.6);
        const top = major ? 157 : 163;
        return <rect key={i} x={x} y={top} width={!major && i % 2 === 0 ? 2 : 1} height={168 - top} fill="#000" />;
      })}
    </g>
    {range(12).map((i) => (
      <text key={i} x={519.6 + i * 206} y="153" textAnchor="middle" fill={C.text}>
        {i + 5}s
      </text>
    ))}
  </Ruler>
);

function LegendEntry({ row }) {
  const Icon = ICONS[row.icon];
  const checked = ["select", "group", "item", "deep"].includes(row.t);
  const gap = row.t === "select" ? 13 : row.t === "group" ? 14 : ICON_GAP[row.t];
  return (
    <LegendRow $h={row.h} $t={row.t}>
      {checked && <Check gap={gap} />}
      {Icon && (
        <IconSlot>
          <Icon color={row.color} />
        </IconSlot>
      )}
      {row.t === "select" ? (
        <Select>
          Thread
          <svg width="14" height="9" viewBox="0 0 14 9">
            <path d="M1 1.2L7 7.2L13 1.2" fill="none" stroke="#000" strokeWidth="2.2" />
          </svg>
        </Select>
      ) : (
        <span>
          {row.label}
          {row.more && <More>…</More>}
        </span>
      )}
    </LegendRow>
  );
}

export default function App() {
  return (
    <>
      <GlobalStyle />
      <Page>
        <TopBar>
          <TopLeft>
            <Title>
              GPU Compute/Media Hotspots (preview)
              <HelpIcon />
            </Title>
            <Tabs>
              {["Analysis Configuration", "Collection Log", "Summary", "Graphics"].map((t) => (
                <Tab key={t} $active={t === "Graphics"}>
                  {t}
                </Tab>
              ))}
            </Tabs>
          </TopLeft>
          <Logo />
        </TopBar>
        <SubTabs>
          <SubTab>Memory Hierarchy Diagram</SubTab>
          <SubTab $active>Platform</SubTab>
        </SubTabs>
        <Main>
          <Timeline>
            <RulerRow>
              <Toolbar>
                <ToolbarIcons />
              </Toolbar>
              <TimeRuler />
            </RulerRow>
            <ThreadArea>
              <Rail>
                <RailText>Thread</RailText>
              </Rail>
              <Rows>
                {THREADS.map((row, i) => (
                  <Row key={i} $h={row.h}>
                    <ThreadLabel $line={(row.full || row.h) - 1}>{row.name}</ThreadLabel>
                    <Sliver $green={row.start === 0} />
                    <Gutter />
                    <ThreadPlot row={row} />
                    <Gutter />
                  </Row>
                ))}
              </Rows>
              <VScroll>
                <VThumb />
              </VScroll>
            </ThreadArea>
            <Rows>
              {METRICS.map((m) => (
                <Row key={m.name} $h={m.h}>
                  <MetricLabel $h={m.h}>
                    {m.name}
                    {m.max && (
                      <MaxValue>
                        {m.max}
                        <MaxTick />
                      </MaxValue>
                    )}
                  </MetricLabel>
                  <Gutter />
                  <MetricPlot kind={m.kind} h={m.h} />
                  <Gutter />
                  <MetricEnd />
                </Row>
              ))}
            </Rows>
            <HScrollRow>
              <HTrack>
                <HThumb />
              </HTrack>
            </HScrollRow>
          </Timeline>
          <Legend>
            {LEGEND.map((row, i) => (
              <LegendEntry key={i} row={row} />
            ))}
          </Legend>
          <LegendScroll />
        </Main>
        <Footer>
          <FilterLabel>FILTER</FilterLabel>
          <FilterIcons />
          <Grip>
            {range(4).map((i) => (
              <GripDot key={i} />
            ))}
          </Grip>
        </Footer>
      </Page>
    </>
  );
}
